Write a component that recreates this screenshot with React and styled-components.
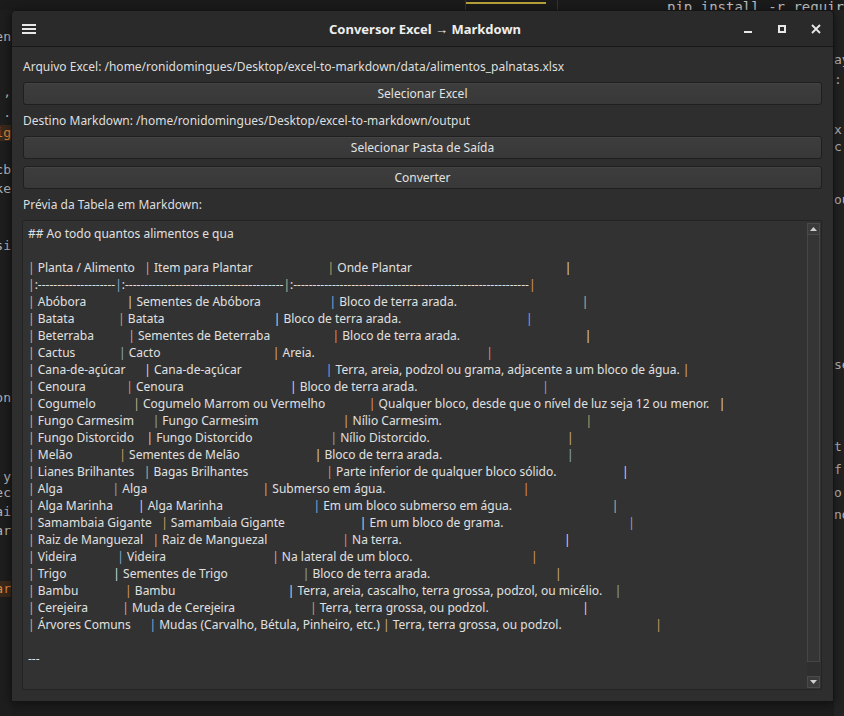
import styled, { createGlobalStyle } from "styled-components";

const Global = createGlobalStyle`
  html, body { margin: 0; padding: 0; background: #1c1c1c; }
  body { font-family: "Noto Sans", "Open Sans", sans-serif; }
  * { box-sizing: border-box; }
`;

const Desktop = styled.div`
  position: relative;
  width: 844px;
  height: 716px;
  overflow: hidden;
  background: #1d1d1d;
`;

// ---- the editor behind the window ----
const Backdrop = styled.div`
  display: flex;
  flex-direction: column;
  height: 100%;
  font-family: "DejaVu Sans Mono", monospace;
  font-size: 13px;
  color: #b9b9b9;
`;
const TopStrip = styled.div`
  height: 10px;
  flex: none;
  display: flex;
  align-items: flex-end;
  background: #1b1b1b;
  overflow: hidden;
`;
const TopThumb = styled.div`
  flex: none;
  margin-left: 465px;
  width: 93px;
  height: 10px;
  border-left: 1px solid #333;
  border-right: 1px solid #333;
  background: linear-gradient(90deg, #b8a23a 0 80px, transparent 80px) 0 2px / 100% 2px no-repeat, #1b1b1b;
`;
const TopCode = styled.div`
  flex: none;
  margin-left: 109px;
  height: 10px;
  font-size: 14px;
  color: #c0c0c0;
  white-space: nowrap;
  display: flex;
  align-items: flex-end;
  & span { line-height: 14px; transform: translateY(4px); }
`;
const Sides = styled.div`
  flex: 1;
  display: flex;
  justify-content: space-between;
`;
const Strip = styled.div`
  width: ${(p) => p.$w}px;
  display: flex;
  flex-direction: column;
  align-items: ${(p) => (p.$left ? "flex-end" : "flex-start")};
  background: ${(p) => (p.$left ? "#1e1e1e" : "#232323")};
  overflow: hidden;
`;
const Frag = styled.div`
  flex: none;
  margin-top: ${(p) => p.$top}px;
  height: 16px;
  line-height: 16px;
  white-space: nowrap;
  color: ${(p) => (p.$hot ? "#e08a3c" : "#b8b8b8")};
  background: ${(p) => (p.$hot ? "#3a2a1c" : "transparent")};
`;

// ---- window ----
const Window = styled.div`
  position: absolute;
  left: 11px;
  top: 10px;
  width: 823px;
  height: 692px;
  display: flex;
  flex-direction: column;
  background: #2e2e2e;
  border: 1px solid #141414;
  border-radius: 5px 5px 0 0;
  box-shadow: 0 2px 12px rgba(0, 0, 0, 0.5);
  overflow: hidden;
`;
const TitleBar = styled.div`
  height: 36px;
  flex: none;
  display: grid;
  grid-template-columns: 1fr auto 1fr;
  align-items: center;
  padding: 0 5px 0 10px;
  background: #2a2a2a;
  border-bottom: 1px solid #181818;
`;
const Title = styled.div`
  font-size: 13px;
  font-weight: 700;
  color: #eeeeee;
`;
const Controls = styled.div`
  display: flex;
  justify-content: flex-end;
  gap: 10px;
`;
const CtrlBtn = styled.div`
  width: 24px;
  height: 24px;
  display: flex;
  align-items: center;
  justify-content: center;
`;
const Body = styled.div`
  flex: 1;
  display: flex;
  flex-direction: column;
  gap: 7px;
  padding: 11px 11px 11px 10px;
  min-height: 0;
`;
const Label = styled.div`
  height: 17px;
  line-height: 17px;
  font-size: 12px;
  color: #dedede;
  white-space: nowrap;
  padding-left: 1px;
`;
const Button = styled.div`
  height: 23px;
  flex: none;
  margin-left: 1px;
  display: flex;
  align-items: center;
  justify-content: center;
  font-size: 12px;
  color: #e2e2e2;
  background: linear-gradient(#3d3d3d, #383838);
  border: 1px solid #1f1f1f;
  border-radius: 3px;
  box-shadow: inset 0 1px 0 rgba(255, 255, 255, 0.04);
`;
const TextBox = styled.div`
  flex: 1;
  min-height: 0;
  display: flex;
  background: #323232;
  border: 1px solid #242424;
  border-radius: 2px;
`;
const TextContent = styled.div`
  flex: 1;
  overflow: hidden;
  padding: 4px 5px;
  font-size: 12px;
  line-height: 17px;
  color: #e0e0e0;
  white-space: pre;
`;
const Pipe = styled.span`
  color: ${(p) => p.$tint};
`;
const ScrollBar = styled.div`
  width: 13px;
  flex: none;
  margin: 2px 1px 1px 0;
  display: flex;
  flex-direction: column;
  background: #2f2f2f;
`;
const Arrow = styled.div`
  height: 12px;
  flex: none;
  display: flex;
  align-items: center;
  justify-content: center;
  background: #3b3b3b;
  border: 1px solid #4a4a4a;
`;
const Handle = styled.div`
  flex: 1;
  margin-bottom: 14px;
  background: #353535;
  border: 1px solid #464646;
  border-top: none;
`;

const rows = [
  ["Abóbora", "Sementes de Abóbora", "Bloco de terra arada."],
  ["Batata", "Batata", "Bloco de terra arada."],
  ["Beterraba", "Sementes de Beterraba", "Bloco de terra arada."],
  ["Cactus", "Cacto", "Areia."],
  ["Cana-de-açúcar", "Cana-de-açúcar", "Terra, areia, podzol ou grama, adjacente a um bloco de água."],
  ["Cenoura", "Cenoura", "Bloco de terra arada."],
  ["Cogumelo", "Cogumelo Marrom ou Vermelho", "Qualquer bloco, desde que o nível de luz seja 12 ou menor."],
  ["Fungo Carmesim", "Fungo Carmesim", "Nílio Carmesim."],
  ["Fungo Distorcido", "Fungo Distorcido", "Nílio Distorcido."],
  ["Melão", "Sementes de Melão", "Bloco de terra arada."],
  ["Lianes Brilhantes", "Bagas Brilhantes", "Parte inferior de qualquer bloco sólido."],
  ["Alga", "Alga", "Submerso em água."],
  ["Alga Marinha", "Alga Marinha", "Em um bloco submerso em água."],
  ["Samambaia Gigante", "Samambaia Gigante", "Em um bloco de grama."],
  ["Raiz de Manguezal", "Raiz de Manguezal", "Na terra."],
  ["Videira", "Videira", "Na lateral de um bloco."],
  ["Trigo", "Sementes de Trigo", "Bloco de terra arada."],
  ["Bambu", "Bambu", "Terra, areia, cascalho, terra grossa, podzol, ou micélio."],
  ["Cerejeira", "Muda de Cerejeira", "Terra, terra grossa, ou podzol."],
  ["Árvores Comuns", "Mudas (Carvalho, Bétula, Pinheiro, etc.)", "Terra, terra grossa, ou podzol."],
];

const widths = [19, 40, 60];
const fmt = (cells) => "| " + cells.map((c, i) => c.padEnd(widths[i])).join(" | ") + " |";
const sep = "|" + widths.map((w) => ":" + "-".repeat(w + 1)).join("|") + "|";

const lines = [
  "## Ao todo quantos alimentos e qua",
  "",
  fmt(["Planta / Alimento", "Item para Plantar", "Onde Plantar"]),
  sep,
  ...rows.map(fmt),
  "",
  "---",
];

// sub-pixel fringes make the thin pipes look tinted
const tints = ["#cdb08e", "#86a9d8", "#d8dbe0", "#d89a62"];

function Line({ text, row }) {
  const parts = text.split("|");
  return (
    <div>
      {parts.map((p, i) => (
        <span key={i}>
          {i > 0 && <Pipe $tint={i === 1 ? tints[0] : tints[(row * 5 + i * 3) % 4]}>|</Pipe>}
          {p}
        </span>
      ))}
      {text === "" && " "}
    </div>
  );
}

const Tri = ({ up }) => (
  <svg width="7" height="4" viewBox="0 0 7 4">
    <path d={up ? "M0 4 L3.5 0 L7 4 Z" : "M0 0 L3.5 4 L7 0 Z"} fill="#d0d0d0" />
  </svg>
);

const leftFrags = [
  { t: 19, s: "Conten" },
  { t: 39, s: "," },
  { t: 5, s: "." },
  { t: 4, s: "sig", hot: true },
  { t: 21, s: "acb" },
  { t: 3, s: "ake" },
  { t: 41, s: "psi" },
  { t: 136, s: "on" },
  { t: 63, s: "y" },
  { t: 0, s: "rec" },
  { t: 3, s: "rai" },
  { t: 3, s: "tar" },
  { t: 42, s: "par", hot: true },
];
const rightFrags = [
  { t: 42, s: "ay" },
  { t: 4, s: ":" },
  { t: 34, s: "x" },
  { t: 1, s: "c" },
  { t: 37, s: "ou" },
  { t: 149, s: "se" },
  { t: 66, s: "t" },
  { t: 7, s: "f" },
  { t: 7, s: "o" },
  { t: 6, s: "nd" },
];

export default function App() {
  return (
    <>
      <Global />
      <Desktop>
        <Backdrop>
          <TopStrip>
            <TopThumb />
            <TopCode>
              <span>pip install -r requirements.txt</span>
            </TopCode>
          </TopStrip>
          <Sides>
            <Strip $w={11} $left>
              {leftFrags.map((f, i) => (
                <Frag key={i} $top={f.t} $hot={f.hot}>{f.s}</Frag>
              ))}
            </Strip>
            <Strip $w={10}>
              {rightFrags.map((f, i) => (
                <Frag key={i} $top={f.t}>{f.s}</Frag>
              ))}
            </Strip>
          </Sides>
        </Backdrop>

        <Window>
          <TitleBar>
            <svg width="14" height="10" viewBox="0 0 14 10">
              <rect x="0" y="0" width="14" height="2" fill="#e8e8e8" />
              <rect x="0" y="4" width="14" height="2" fill="#e8e8e8" />
              <rect x="0" y="8" width="14" height="2" fill="#e8e8e8" />
            </svg>
            <Title>Conversor Excel → Markdown</Title>
            <Controls>
              <CtrlBtn>
                <svg width="10" height="10" viewBox="0 0 10 10">
                  <rect x="1" y="7" width="8" height="2" fill="#e8e8e8" />
                </svg>
              </CtrlBtn>
              <CtrlBtn>
                <svg width="10" height="10" viewBox="0 0 10 10">
                  <rect x="2" y="2" width="6" height="6" fill="none" stroke="#e8e8e8" strokeWidth="2" />
                </svg>
              </CtrlBtn>
              <CtrlBtn>
                <svg width="10" height="10" viewBox="0 0 10 10">
                  <path d="M1 1 L9 9 M9 1 L1 9" stroke="#e8e8e8" strokeWidth="1.8" />
                </svg>
              </CtrlBtn>
            </Controls>
          </TitleBar>

          <Body>
            <Label>Arquivo Excel: /home/ronidomingues/Desktop/excel-to-markdown/data/alimentos_palnatas.xlsx</Label>
            <Button>Selecionar Excel</Button>
            <Label>Destino Markdown: /home/ronidomingues/Desktop/excel-to-markdown/output</Label>
            <Button>Selecionar Pasta de Saída</Button>
            <Button>Converter</Button>
            <Label>Prévia da Tabela em Markdown:</Label>
            <TextBox>
              <TextContent>
                {lines.map((l, i) => (
                  <Line key={i} text={l} row={i} />
                ))}
              </TextContent>
              <ScrollBar>
                <Arrow>
                  <Tri up />
                </Arrow>
                <Handle />
                <Arrow>
                  <Tri />
                </Arrow>
              </ScrollBar>
            </TextBox>
          </Body>
        </Window>
      </Desktop>
    </>
  );
}
